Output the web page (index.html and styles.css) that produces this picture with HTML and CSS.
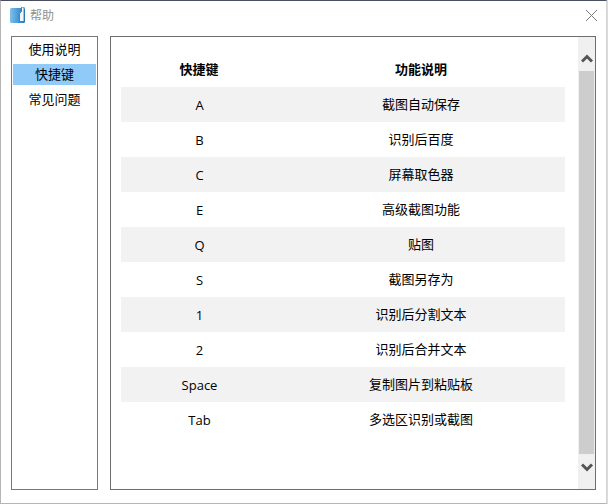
FILE: index.html
```html
<!DOCTYPE html>
<html lang="zh-CN">
<head>
<meta charset="utf-8">
<title>帮助</title>
<link rel="stylesheet" href="styles.css">
</head>
<body>
<div class="window">
  <header class="titlebar">
    <svg class="app-icon" width="15" height="16" viewBox="0 0 15 16">
      <defs>
        <linearGradient id="icon-fill" x1="0" y1="0" x2="1" y2="0">
          <stop offset="0" stop-color="#7cc0ee"/>
          <stop offset="1" stop-color="#1f78c4"/>
        </linearGradient>
      </defs>
      <rect x="0" y="1" width="15" height="15" rx="1.5" fill="url(#icon-fill)"/>
      <path d="M9.5 14.5V6.5l2-2V0h2.5v14.5z" fill="#f2f7fb" stroke="#3a6f98" stroke-width="0.8"/>
    </svg>
    <span class="title">帮助</span>
    <svg class="close" width="13" height="13" viewBox="0 0 13 13">
      <path d="M1 1l11 11M12 1L1 12" stroke="#7a7a7a" stroke-width="1" fill="none"/>
    </svg>
  </header>
  <div class="content">
    <nav class="side">
      <div class="side-item">使用说明</div>
      <div class="side-item selected">快捷键</div>
      <div class="side-item">常见问题</div>
    </nav>
    <main class="panel">
      <div class="table-wrap">
        <div class="row head"><div class="key-head">快捷键</div><div class="desc">功能说明</div></div>
        <div class="row alt"><div class="key">A</div><div class="desc">截图自动保存</div></div>
        <div class="row"><div class="key">B</div><div class="desc">识别后百度</div></div>
        <div class="row alt"><div class="key">C</div><div class="desc">屏幕取色器</div></div>
        <div class="row"><div class="key">E</div><div class="desc">高级截图功能</div></div>
        <div class="row alt"><div class="key">Q</div><div class="desc">贴图</div></div>
        <div class="row"><div class="key">S</div><div class="desc">截图另存为</div></div>
        <div class="row alt"><div class="key">1</div><div class="desc">识别后分割文本</div></div>
        <div class="row"><div class="key">2</div><div class="desc">识别后合并文本</div></div>
        <div class="row alt"><div class="key">Space</div><div class="desc">复制图片到粘贴板</div></div>
        <div class="row"><div class="key">Tab</div><div class="desc">多选区识别或截图</div></div>
      </div>
      <div class="scrollbar">
        <div class="arrow arrow-up">
          <svg width="12" height="9" viewBox="0 0 12 9"><path d="M1 7.5L6 2.5 11 7.5" stroke="#555" stroke-width="3" fill="none"/></svg>
        </div>
        <div class="thumb"></div>
        <div class="arrow arrow-down">
          <svg width="12" height="9" viewBox="0 0 12 9"><path d="M1 1.5L6 6.5 11 1.5" stroke="#555" stroke-width="3" fill="none"/></svg>
        </div>
      </div>
    </main>
  </div>
</div>
</body>
</html>
```

FILE: styles.css
```css
* { box-sizing: border-box; }
html, body { margin: 0; padding: 0; }
body {
  width: 608px;
  height: 504px;
  overflow: hidden;
  background: #dcdcdc;
  font-family: "Open Sans", "Noto Sans CJK SC", sans-serif;
  font-size: 13px;
  color: #000;
}
.window {
  width: 607px;
  height: 504px;
  background: #fff;
  border-top: 1px solid #4a4f60;
  border-left: 1px solid #b5b5b5;
  border-right: 1px solid #d4d4d4;
  border-bottom: 1px solid #b5b5b5;
  display: flex;
  flex-direction: column;
}
.titlebar {
  height: 35px;
  flex: none;
  display: flex;
  align-items: flex-start;
  padding: 6px 8px 0 9px;
}
.app-icon { flex: none; }
.title {
  margin-left: 5px;
  margin-top: -1px;
  font-size: 12px;
  line-height: 18px;
  color: #8f8f8f;
  font-family: "Noto Sans CJK SC", sans-serif;
}
.close { margin-left: auto; margin-top: 2px; }
.content {
  display: flex;
  gap: 12px;
  padding: 0 10px;
  height: 454px;
}
.side {
  width: 87px;
  flex: none;
  border: 1px solid #787878;
  padding: 2px 1px;
  display: flex;
  flex-direction: column;
  align-items: stretch;
  gap: 4px;
}
.side-item {
  height: 21px;
  line-height: 19px;
  text-align: center;
  font-family: "Noto Sans CJK SC", sans-serif;
  font-size: 13px;
}
.side-item.selected { background: #90caf9; }
.panel {
  flex: 1;
  border: 1px solid #6e6e6e;
  display: flex;
  padding-left: 10px;
}
.table-wrap {
  width: 444px;
  padding-top: 15px;
  flex: none;
}
.row {
  display: grid;
  grid-template-columns: 156px 288px;
  height: 35px;
  align-items: center;
  text-align: center;
  padding-bottom: 2px;
}
.row.alt { background: #f2f2f2; }
.row.head { font-weight: 700; font-family: "Noto Sans CJK SC", sans-serif; }
.key { padding-left: 1px; padding-top: 2px; }
.desc { font-family: "Noto Sans CJK SC", sans-serif; }
.scrollbar {
  margin-left: 13px;
  width: 17px;
  flex: none;
  background: #f0f0f0;
  display: flex;
  flex-direction: column;
  align-items: center;
}
.arrow {
  height: 34px;
  flex: none;
  width: 100%;
  display: flex;
  align-items: center;
  justify-content: center;
}
.arrow-up { padding-top: 9px; }
.arrow-down { padding-bottom: 9px; height: 35px; }
.thumb {
  flex: 1;
  width: 15px;
  background: #cdcdcd;
}
```
